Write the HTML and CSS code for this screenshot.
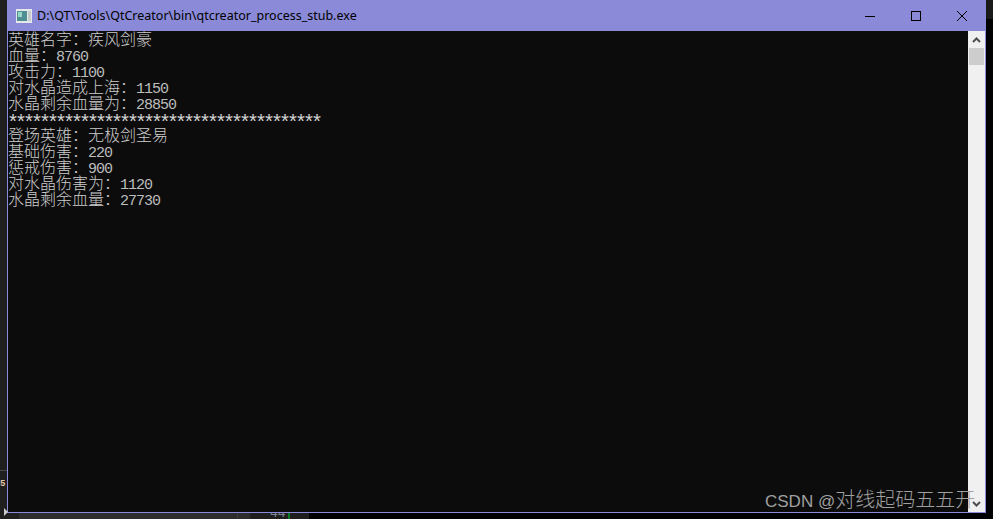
FILE: index.html
```
<!DOCTYPE html>
<html lang="zh">
<head>
<meta charset="utf-8">
<title>qtcreator_process_stub</title>
<link rel="stylesheet" href="styles.css">
</head>
<body>
<div class="desktop">
  <div class="row-main">
    <aside class="strip-left">
      <div class="strip-line"></div>
      <div class="strip-glyph">5</div>
      <div class="strip-arrow"></div>
    </aside>
    <main class="window">
      <header class="titlebar">
        <svg class="app-icon" width="16" height="16" viewBox="0 0 16 16">
          <rect x="0" y="1" width="16" height="14" fill="#e4e8e8"/>
          <rect x="1" y="3" width="10" height="10" fill="#4f8f94"/>
          <rect x="2" y="4" width="4" height="5" fill="#9ad6c4"/>
          <rect x="12" y="3" width="3" height="10" fill="#c4caca"/>
        </svg>
        <span class="title">D:\QT\Tools\QtCreator\bin\qtcreator_process_stub.exe</span>
        <div class="controls">
          <div class="ctl"><svg width="10" height="10" viewBox="0 0 10 10"><path d="M0 5.5H10" stroke="#000" fill="none"/></svg></div>
          <div class="ctl"><svg width="10" height="10" viewBox="0 0 10 10"><rect x=".5" y=".5" width="9" height="9" stroke="#000" fill="none"/></svg></div>
          <div class="ctl"><svg width="10" height="10" viewBox="0 0 10 10"><path d="M0 0L10 10M10 0L0 10" stroke="#000" fill="none"/></svg></div>
        </div>
      </header>
      <div class="client">
        <div class="console">
          <div class="l"><b>英雄名字：疾风剑豪</b></div>
          <div class="l"><b>血量：</b>8760</div>
          <div class="l"><b>攻击力：</b>1100</div>
          <div class="l"><b>对水晶造成上海：</b>1150</div>
          <div class="l"><b>水晶剩余血量为：</b>28850</div>
          <div class="l stars">***************************************</div>
          <div class="l"><b>登场英雄：无极剑圣易</b></div>
          <div class="l"><b>基础伤害：</b>220</div>
          <div class="l"><b>惩戒伤害：</b>900</div>
          <div class="l"><b>对水晶伤害为：</b>1120</div>
          <div class="l"><b>水晶剩余血量：</b>27730</div>
        </div>
        <div class="scrollbar">
          <div class="sb-btn"><svg width="9" height="6" viewBox="0 0 9 6"><path d="M1 5L4.5 1.5L8 5" stroke="#505050" stroke-width="2" fill="none"/></svg></div>
          <div class="sb-thumb"></div>
          <div class="sb-track"></div>
          <div class="sb-btn"><svg width="9" height="6" viewBox="0 0 9 6"><path d="M1 1L4.5 4.5L8 1" stroke="#505050" stroke-width="2" fill="none"/></svg></div>
        </div>
      </div>
    </main>
    <aside class="strip-right"></aside>
  </div>
  <footer class="strip-bottom">
    <div class="seg-a"></div>
    <div class="seg-b"></div>
    <div class="seg-c"><span class="lineno">44</span><span class="marker"></span></div>
    <div class="seg-d"></div>
  </footer>
  <div class="watermark">CSDN @<span class="wm-cn">对线起码五五开</span></div>
</div>
</body>
</html>
```
FILE: styles.css
```
* { box-sizing: border-box; }
html, body { margin: 0; padding: 0; }
body { background: #000; }
.desktop {
  position: relative;
  width: 993px;
  height: 519px;
  overflow: hidden;
  display: flex;
  flex-direction: column;
}
.row-main { display: flex; height: 513px; }
.strip-left {
  width: 7px;
  background: #1f1f1f;
  display: flex;
  flex-direction: column;
  position: relative;
}
.strip-line { height: 1px; margin-top: 470px; background: #4a4a4a; }
.strip-glyph {
  margin-top: 8px;
  font: bold 9px/10px "Liberation Mono", monospace;
  color: #e0c8a8;
  width: 7px;
  overflow: hidden;
}
.strip-arrow {
  position: absolute;
  left: 4px;
  top: 508px;
  border-left: 4px solid #c8c8c8;
  border-top: 4px solid transparent;
  border-bottom: 4px solid transparent;
}
.window {
  width: 979px;
  display: flex;
  flex-direction: column;
  border-left: 1px solid #8a8ad8;
  border-right: 1px solid #8a8ad8;
  border-bottom: 1px solid #8a8ad8;
}
.titlebar {
  height: 31px;
  background: #8a8ad8;
  display: flex;
  align-items: center;
  padding-left: 8px;
  flex: none;
}
.app-icon { flex: none; }
.title {
  margin-left: 5px;
  font: 12.5px/16px "Noto Sans", "Liberation Sans", sans-serif;
  color: #000;
  white-space: nowrap;
}
.controls { margin-left: auto; display: flex; height: 31px; }
.ctl {
  width: 46px;
  height: 31px;
  display: flex;
  align-items: center;
  justify-content: center;
}
.client { flex: 1; display: flex; background: #0c0c0c; min-height: 0; }
.console {
  flex: 1;
  margin-top: -1px;
  color: #bcbcbc;
  font: 15px/16px "Liberation Mono", monospace;
  letter-spacing: -1px;
}
.l { height: 16px; white-space: pre; }
.l b {
  font: 300 16px/16px "Noto Sans CJK SC", sans-serif;
  letter-spacing: 0;
  color: #cccccc;
}
.stars {
  font-size: 20px;
  line-height: 28px;
  letter-spacing: -4px;
  margin-left: -1px;
  color: #d4d4d4;
}
.scrollbar {
  width: 17px;
  flex: none;
  background: #f0f0f0;
  display: flex;
  flex-direction: column;
  align-items: center;
}
.sb-btn {
  height: 17px;
  width: 17px;
  flex: none;
  display: flex;
  align-items: center;
  justify-content: center;
}
.sb-thumb { width: 15px; height: 17px; background: #cdcdcd; flex: none; }
.sb-track { flex: 1; }
.strip-right {
  width: 7px;
  background: linear-gradient(#1a1a1a 0 19px, #000 19px);
}
.strip-bottom { height: 6px; display: flex; background: #1f1f1f; }
.seg-a { width: 19px; background: #1f1f1f; }
.seg-b { width: 231px; background: linear-gradient(90deg, #2d2d2d 0 218px, #3a3a3a 218px 219px, #2d2d2d 219px); }
.seg-c {
  width: 59px;
  background: #1e1e1e;
  display: flex;
  position: relative;
  overflow: hidden;
}
.lineno {
  font: 13px/13px "Liberation Mono", monospace;
  color: #7c8492;
  margin: -6px 0 0 20px;
  white-space: nowrap;
}
.marker { position: absolute; left: 38px; top: 0; width: 2px; height: 6px; background: #0a7a1e; }
.seg-d { flex: 1; background: #000; }
.watermark {
  position: absolute;
  left: 765px;
  top: 487px;
  font: 17px/24px "Liberation Sans", sans-serif;
  color: #a0a0a0;
  white-space: nowrap;
}
.wm-cn { font: 300 20px/24px "Noto Sans CJK SC", sans-serif; }
```
